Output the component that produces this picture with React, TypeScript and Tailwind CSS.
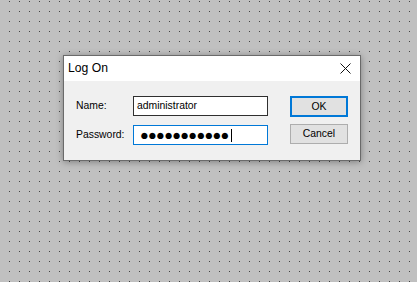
import { useState } from 'react';

function CloseIcon() {
  return (
    <svg width="11" height="11" viewBox="0 0 11 11" className="block">
      <path d="M0.5 0.5 L10.5 10.5 M10.5 0.5 L0.5 10.5" stroke="#111" strokeWidth="1" />
    </svg>
  );
}

export default function App() {
  const [name] = useState('administrator');
  const [password] = useState('●●●●●●●●●●●');

  return (
    <div className="w-[417px] h-[282px] overflow-hidden bg-[#404040] bg-[linear-gradient(to_right,#c0c0c0_9px,transparent_9px,transparent_10px),linear-gradient(to_bottom,#c0c0c0_1px,transparent_1px,transparent_2px,#c0c0c0_2px)] bg-[size:10px_10px] pl-[63px] pt-[55px] font-['Liberation_Sans',Arial,sans-serif]">
      {/* Log On dialog */}
      <div className="w-[298px] h-[106px] border border-[#6a6a6a] bg-[#f0f0f0] shadow-[0_1px_7px_rgba(0,0,0,0.35)] flex flex-col">
        <div className="h-[25px] bg-white flex items-center justify-between pl-[4px] pr-[9px]">
          <span className="text-[12.2px] text-black leading-none">Log On</span>
          <CloseIcon />
        </div>

        <div className="flex pl-[12px] pt-[15px]">
          <div className="flex flex-col gap-[9px]">
            <div className="flex items-center h-[20px]">
              <span className="w-[57px] text-[10.4px] text-black">Name:</span>
              <div className="w-[135px] h-[20px] border border-[#2f2f2f] bg-white flex items-center pl-[3px]">
                <span className="text-[10.4px] text-black leading-none">{name}</span>
              </div>
            </div>
            <div className="flex items-center h-[20px]">
              <span className="w-[57px] text-[10.4px] text-black">Password:</span>
              <div className="w-[135px] h-[20px] border border-[#0078d7] bg-white flex items-center pl-[6px]">
                <span className="text-[14.5px] tracking-[-0.7px] text-black leading-none">{password}</span>
                <span className="w-px h-[13px] bg-black ml-[2px]" />
              </div>
            </div>
          </div>

          <div className="flex flex-col gap-[7px] ml-[22px]">
            <button className="w-[58px] h-[21px] border-2 border-[#0078d7] bg-[#e1e1e1] text-[10.4px] text-black flex items-center justify-center">
              OK
            </button>
            <button className="w-[58px] h-[20px] border border-[#adadad] bg-[#e1e1e1] text-[10.4px] text-black flex items-center justify-center">
              Cancel
            </button>
          </div>
        </div>
      </div>
    </div>
  );
}
